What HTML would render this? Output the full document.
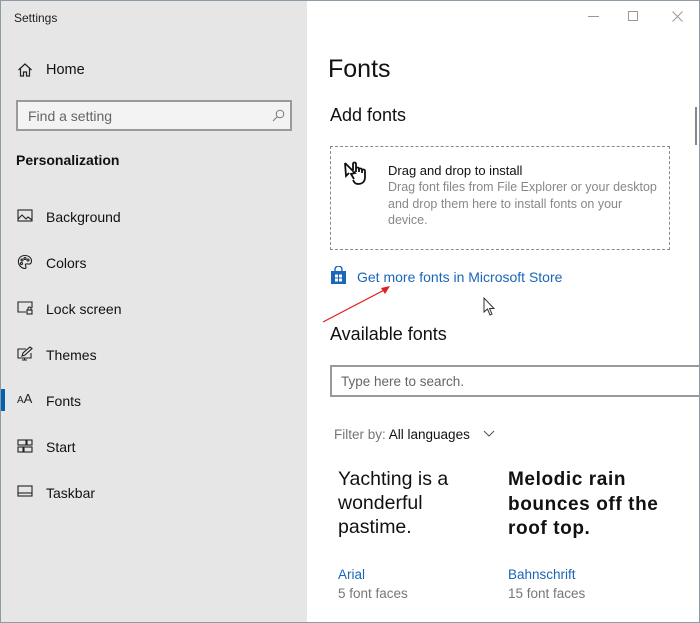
<!DOCTYPE html>
<html><head><style>
*{margin:0;padding:0;box-sizing:border-box}
body{width:700px;height:623px;overflow:hidden;font-family:"Liberation Sans",sans-serif;background:#fff;position:relative}
.win{position:absolute;left:0;top:0;width:700px;height:623px;border:1px solid #8e9aa4}
.side{position:absolute;left:1px;top:1px;width:306px;height:621px;background:#e6e6e6}
.a{position:absolute;white-space:nowrap}
.nav{position:absolute;left:45px;font-size:14px;color:#111}
.ic{position:absolute;left:16px}
</style></head><body>
<div class="win"></div>
<div class="side">
<div class="a" style="left:13px;top:10px;font-size:12px;color:#222">Settings</div>
<svg class="ic" style="left:16px;top:61px" width="16" height="16" viewBox="0 0 16 16" fill="none" stroke="#222" stroke-width="1.2"><path d="M1.5 8 L8 2 L14.5 8 M3.5 6.5 V14 H6.5 V10 H9.5 V14 H12.5 V6.5"/></svg>
<div class="nav" style="top:61px;font-size:14.5px">Home</div>
<div class="a" style="left:15px;top:99px;width:276px;height:31px;border:2px solid #9a9a9a;background:#f3f3f3"></div>
<div class="a" style="left:27px;top:107px;font-size:14px;color:#666">Find a setting</div>
<svg class="a" style="left:271px;top:108px" width="13" height="13" viewBox="0 0 13 13" fill="none" stroke="#777" stroke-width="1"><circle cx="8" cy="5" r="3.8"/><path d="M5.3 7.7 L1 12"/></svg>
<div class="a" style="left:15px;top:151px;font-size:14px;font-weight:bold;color:#111">Personalization</div>

<svg class="ic" style="top:208px" width="16" height="14" viewBox="0 0 16 14" fill="none" stroke="#222" stroke-width="1.1"><rect x="1" y="1" width="14" height="11"/><path d="M1 10 L5 6 L9 10 L11 8 L15 11"/></svg>
<div class="nav" style="top:208px">Background</div>
<svg class="ic" style="top:253px" width="16" height="16" viewBox="0 0 16 16" fill="none" stroke="#222" stroke-width="1.1"><path d="M8 1.5 C3 1.5 1 5 1.5 8.5 C2 12 5 14.5 8 14.5 C9.5 14.5 9 12.5 8.5 11.5 C8 10 9.5 9.5 11 10 C13.5 10.5 14.5 9 14.5 7 C14.5 4 12 1.5 8 1.5Z"/><circle cx="5" cy="6" r="1"/><circle cx="8" cy="4.5" r="1"/><circle cx="11" cy="6" r="1"/><circle cx="4.5" cy="9.5" r="1"/></svg>
<div class="nav" style="top:254px">Colors</div>
<svg class="ic" style="top:300px" width="16" height="14" viewBox="0 0 16 14" fill="none" stroke="#222" stroke-width="1.1"><path d="M9 11 H1 V1 H15 V7"/><rect x="10" y="9" width="5" height="4"/><path d="M11 9 V7.5 A1.5 1.5 0 0 1 14 7.5 V9"/></svg>
<div class="nav" style="top:300px">Lock screen</div>
<svg class="ic" style="top:345px" width="16" height="15" viewBox="0 0 16 15" fill="none" stroke="#222" stroke-width="1.1"><path d="M9 3 H1 V12 H14 V7 M5 14 H10 M7.5 12 V14"/><path d="M5 10 L6 7 L13 1 L15 2.5 L8 9 Z"/></svg>
<div class="nav" style="top:346px">Themes</div>
<div class="a" style="left:0;top:388px;width:4px;height:22px;background:#0063b1"></div>
<div class="a" style="left:16px;top:390px;font-size:10px;color:#222">A<span style="font-size:13px">A</span></div>
<div class="nav" style="top:392px">Fonts</div>
<svg class="ic" style="top:438px" width="16" height="14" viewBox="0 0 16 14" fill="none" stroke="#222" stroke-width="1.1"><rect x="1" y="1" width="8" height="5"/><rect x="10" y="1" width="5" height="5"/><rect x="1" y="8" width="5" height="5"/><rect x="7" y="8" width="8" height="5"/></svg>
<div class="nav" style="top:438px">Start</div>
<svg class="ic" style="top:484px" width="16" height="12" viewBox="0 0 16 12" fill="none" stroke="#222" stroke-width="1.1"><rect x="1" y="1" width="14" height="10"/><path d="M1 8 H15"/></svg>
<div class="nav" style="top:484px">Taskbar</div>
</div>

<div class="a" style="left:588px;top:16px;width:11px;height:1px;background:#999"></div>
<div class="a" style="left:628px;top:11px;width:10px;height:10px;border:1px solid #999"></div>
<svg class="a" style="left:672px;top:11px" width="11" height="11" viewBox="0 0 11 11" stroke="#999" stroke-width="1"><path d="M0.5 0.5 L10.5 10.5 M10.5 0.5 L0.5 10.5"/></svg>
<div class="a" style="left:695px;top:107px;width:2px;height:38px;background:#888"></div>

<div class="a" style="left:328px;top:55px;font-size:25px;color:#111">Fonts</div>
<div class="a" style="left:330px;top:105px;font-size:18px;color:#111">Add fonts</div>
<div class="a" style="left:330px;top:146px;width:340px;height:104px;border:1.5px dashed #8a8a8a"></div>
<svg class="a" style="left:343px;top:160px" width="30" height="26" viewBox="0 0 30 26" fill="none" stroke="#111" stroke-width="1.8"><path d="M2 3 L12 13 L8 14 L11 19 M2 3 L3 16 L6 13"/><path d="M10 10 V4 A1.5 1.5 0 0 1 13 4 V12 M13 9 A1.5 1.5 0 0 1 16 9 V12 M16 10 A1.5 1.5 0 0 1 19 10 V13 M19 11 A1.5 1.5 0 0 1 22 11 V17 C22 22 19 24 15 24 C12 24 11 22 10 20"/></svg>
<div class="a" style="left:388px;top:163px;font-size:13px;color:#111">Drag and drop to install</div>
<div class="a" style="left:388px;top:179px;font-size:12.5px;color:#888;line-height:16.5px;white-space:normal;width:272px">Drag font files from File Explorer or your desktop and drop them here to install fonts on your device.</div>
<svg class="a" style="left:330px;top:266px" width="17" height="18" viewBox="0 0 17 18"><path d="M5 5 V3.5 A3.5 3.5 0 0 1 12 3.5 V5" fill="none" stroke="#1a66b8" stroke-width="1.4"/><rect x="1" y="5" width="15" height="13" fill="#1a66b8"/><rect x="5" y="8.5" width="3" height="3" fill="#fff"/><rect x="9" y="8.5" width="3" height="3" fill="#fff"/><rect x="5" y="12.5" width="3" height="3" fill="#fff"/><rect x="9" y="12.5" width="3" height="3" fill="#fff"/></svg>
<div class="a" style="left:357px;top:269px;font-size:14px;color:#1a66b8">Get more fonts in Microsoft Store</div>
<svg class="a" style="left:320px;top:282px" width="75" height="42"><path d="M3 40 L68 6" stroke="#e02020" stroke-width="1.2"/><path d="M70 4 L61 6 L65 12 Z" fill="#e02020"/></svg>
<svg class="a" style="left:483px;top:297px" width="13" height="20" viewBox="0 0 13 20"><path d="M1 1 V15 L4.5 12 L7 18 L9 17 L6.5 11.5 L11 11.5 Z" fill="#fff" stroke="#333" stroke-width="1"/></svg>
<div class="a" style="left:330px;top:324px;font-size:18px;color:#111">Available fonts</div>
<div class="a" style="left:330px;top:365px;width:372px;height:32px;border:2px solid #999;border-right:none"></div>
<div class="a" style="left:341px;top:374px;font-size:13.5px;color:#666">Type here to search.</div>
<div class="a" style="left:334px;top:427px;font-size:13.5px;color:#777">Filter by: <span style="color:#111">All languages</span></div>
<svg class="a" style="left:483px;top:430px" width="12" height="8"><path d="M1 1 L6 6 L11 1" fill="none" stroke="#555" stroke-width="1"/></svg>
<div class="a" style="left:338px;top:467px;font-size:19.5px;line-height:24px;color:#111">Yachting is a<br>wonderful<br>pastime.</div>
<div class="a" style="left:508px;top:468px;font-size:19px;line-height:24.5px;color:#111;font-weight:bold;letter-spacing:0.6px">Melodic rain<br>bounces off the<br>roof top.</div>
<div class="a" style="left:338px;top:567px;font-size:13.5px;color:#1a66b8">Arial</div>
<div class="a" style="left:338px;top:586px;font-size:13.5px;color:#777">5 font faces</div>
<div class="a" style="left:508px;top:567px;font-size:13.5px;color:#1a66b8">Bahnschrift</div>
<div class="a" style="left:508px;top:586px;font-size:13.5px;color:#777">15 font faces</div>
</body></html>
